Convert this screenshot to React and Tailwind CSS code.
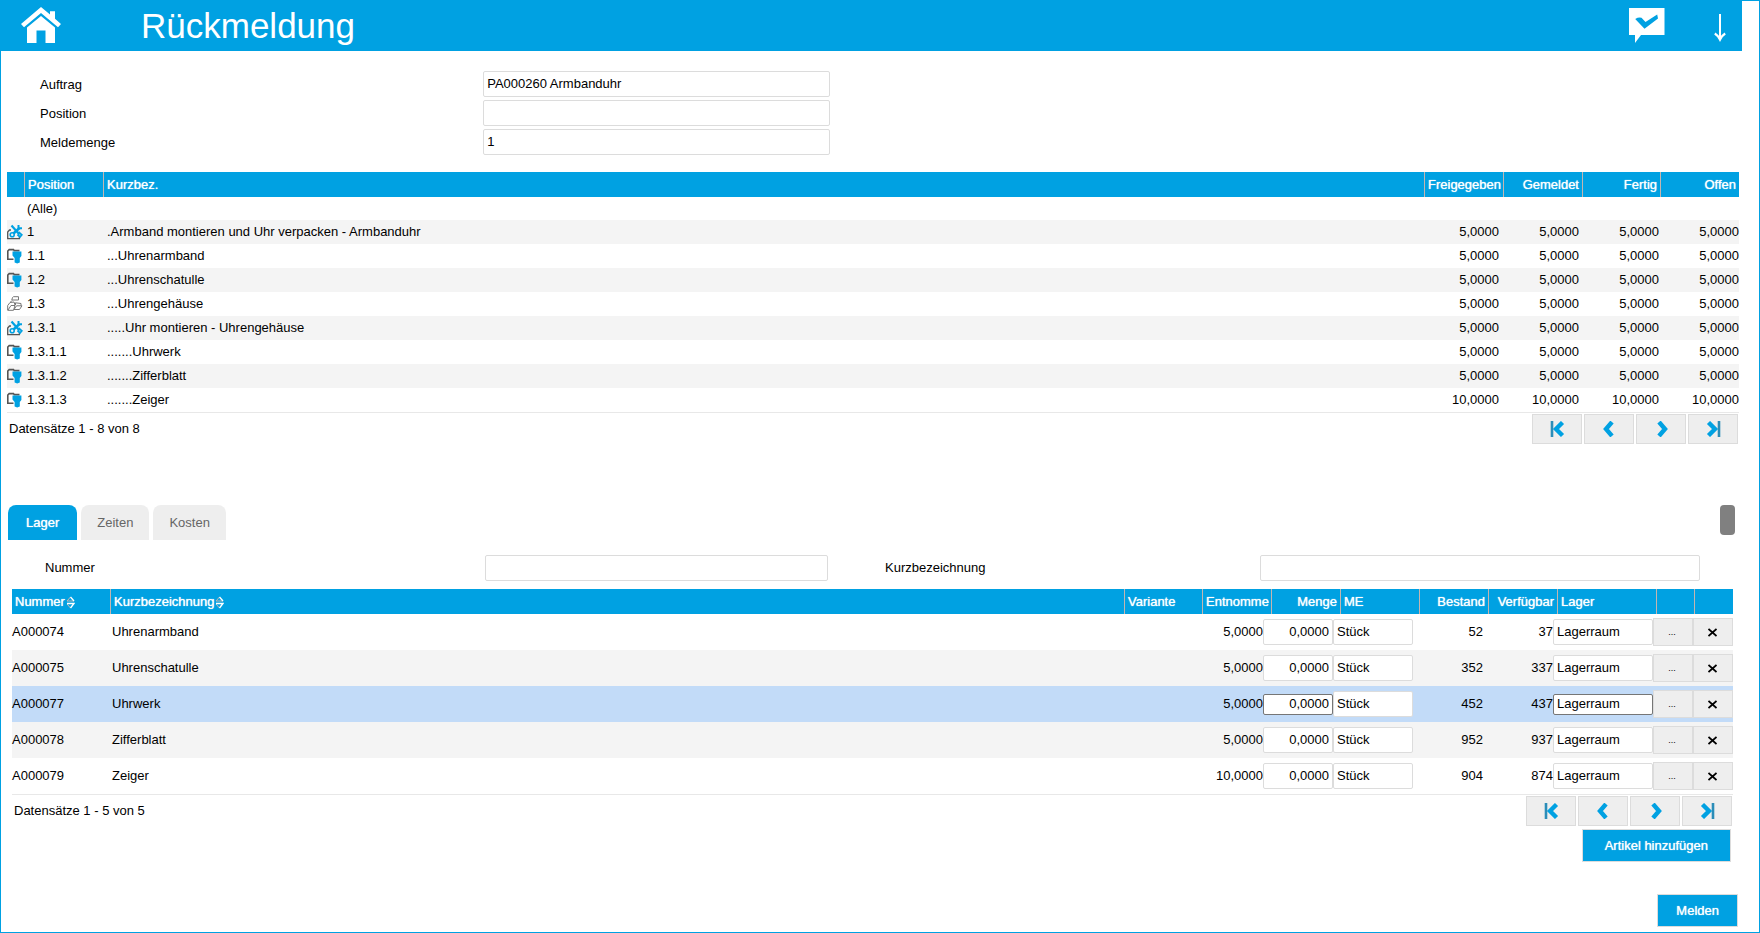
import React, { useState } from 'react';

const positions = [
  { icon: null, pos: '(Alle)', name: '', values: ['', '', '', ''] },
  { icon: 'work', pos: '1', name: '.Armband montieren und Uhr verpacken - Armbanduhr', values: ['5,0000', '5,0000', '5,0000', '5,0000'] },
  { icon: 'part', pos: '1.1', name: '...Uhrenarmband', values: ['5,0000', '5,0000', '5,0000', '5,0000'] },
  { icon: 'part', pos: '1.2', name: '...Uhrenschatulle', values: ['5,0000', '5,0000', '5,0000', '5,0000'] },
  { icon: 'group', pos: '1.3', name: '...Uhrengehäuse', values: ['5,0000', '5,0000', '5,0000', '5,0000'] },
  { icon: 'work', pos: '1.3.1', name: '.....Uhr montieren - Uhrengehäuse', values: ['5,0000', '5,0000', '5,0000', '5,0000'] },
  { icon: 'part', pos: '1.3.1.1', name: '.......Uhrwerk', values: ['5,0000', '5,0000', '5,0000', '5,0000'] },
  { icon: 'part', pos: '1.3.1.2', name: '.......Zifferblatt', values: ['5,0000', '5,0000', '5,0000', '5,0000'] },
  { icon: 'part', pos: '1.3.1.3', name: '.......Zeiger', values: ['10,0000', '10,0000', '10,0000', '10,0000'] },
];

const articles = [
  { nr: 'A000074', name: 'Uhrenarmband', taken: '5,0000', stock: '52', free: '37' },
  { nr: 'A000075', name: 'Uhrenschatulle', taken: '5,0000', stock: '352', free: '337' },
  { nr: 'A000077', name: 'Uhrwerk', taken: '5,0000', stock: '452', free: '437' },
  { nr: 'A000078', name: 'Zifferblatt', taken: '5,0000', stock: '952', free: '937' },
  { nr: 'A000079', name: 'Zeiger', taken: '10,0000', stock: '904', free: '874' },
];

const fieldClass = 'w-full min-w-0 h-[26px] rounded-xs border border-[#dcdcdc] bg-white px-[3px] pb-[2px] outline-none';
const activeFieldClass = 'w-full min-w-0 h-[21px] rounded-xs border border-[#767676] bg-white px-[3px] pb-[2px] outline-none';
const headCell = 'overflow-hidden whitespace-nowrap px-[3px] leading-[25px] font-normal text-left border-l border-[#c4b5b0] text-shadow-[0_0_1px_#fff]';

const HomeIcon = () => (
  <svg width="40" height="37" viewBox="0 0 40 37" fill="#fff">
    <path d="M20 0 L29 7.6 V4.3 H34 V11.8 L40 17 L37 20.3 L20 6 L3 20.3 L0 17 Z" />
    <path d="M20 9 L34 20.5 V36 H24.5 V23.5 H15.5 V36 H6 V20.5 Z" />
  </svg>
);

const MessageIcon = () => (
  <svg width="36" height="36" viewBox="0 0 36 36">
    <path d="M0 0 H35.5 V27 H12 L6 35 V27 H0 Z" fill="#fff" />
    <path d="M6.2 11 Q9.5 9 12.5 9.8 L16.5 14 L28.2 6.4 L29 10.5 L15.5 20.8 Z" fill="#00a1e2" />
  </svg>
);

const DownIcon = () => (
  <svg width="12" height="28" viewBox="0 0 12 28" fill="none" stroke="#fff">
    <path d="M6 0 V26" strokeWidth="2" />
    <path d="M0.8 19.5 Q3.5 21 6 25.5 Q8.5 21 11.2 19.5" strokeWidth="2.4" />
  </svg>
);

const RowIcon = ({ type }) => {
  if (type === 'work') {
    return (
      <svg width="16" height="16" viewBox="0 0 16 16" fill="none">
        <path d="M4 6 H2.5 L0.7 8 V14.7 H12.4 V12.5" stroke="#555" strokeWidth="1.3" />
        <path d="M4.5 1.5 L12.5 10.5" stroke="#00a1e2" strokeWidth="2.2" />
        <path d="M12.5 4 L6.5 9.5" stroke="#00a1e2" strokeWidth="2.6" />
        <path d="M11.5 1 V4.3 H15" stroke="#00a1e2" strokeWidth="2" />
        <path d="M10.5 10.5 L13 13 L14.8 10.8 L11.5 8" stroke="#00a1e2" strokeWidth="1.8" />
        <circle cx="5.2" cy="10.8" r="2" stroke="#00a1e2" strokeWidth="1.6" />
      </svg>
    );
  }
  if (type === 'part') {
    return (
      <svg width="16" height="16" viewBox="0 0 16 16" fill="none">
        <path d="M6.5 11.2 H0.8 V3 L2.2 1.6 H6.5 L7.2 2.6 H12.5" stroke="#555" strokeWidth="1.6" />
        <path d="M5.5 3.6 H14.4 V8 L12.8 10 V14.6 Q10.2 16.2 7.6 14.6 V10 L5.5 7.5 Z" fill="#00a1e2" />
      </svg>
    );
  }
  if (type === 'group') {
    return (
      <svg width="16" height="16" viewBox="0 0 16 16" fill="none" stroke="#777">
        <path d="M5.5 1.5 L6.5 0.7 H11.5 V4 H4.8 L5.5 1.5 M5 4.5 L3.5 6" />
        <path d="M0.7 14.3 V9.5 L3 6.5 L7 6 L8 9 M1 14 L4 9.5 H8 L6.5 14.3 H0.7" />
        <path d="M8.5 9 V6.8 L14 7.5 V9.5 M7 13.5 L9.5 9.8 H15 L12.5 13.5 H7" />
      </svg>
    );
  }
  return null;
};

const SortIcon = () => (
  <svg className="ml-px inline-block" width="9" height="13" viewBox="0 0 9 13" fill="none">
    <path d="M4.5 1 L1 5 H8" stroke="#c4b5b0" />
    <path d="M4.5 1 L8 5" stroke="#fff" strokeWidth="1.4" />
    <path d="M4.5 12 L1 8" stroke="#c4b5b0" />
    <path d="M1 7.5 H8 L4.5 12" stroke="#fff" strokeWidth="1.4" />
  </svg>
);

const pagerButtons = [
  { label: 'Erste Seite', chevron: 'M12.5 1.5 L6 8 L12.5 14.5', bar: 'M2 0 V16' },
  { label: 'Vorherige Seite', chevron: 'M10 1 L4 8 L10 15' },
  { label: 'Nächste Seite', chevron: 'M5 1 L11 8 L5 15' },
  { label: 'Letzte Seite', chevron: 'M2.5 1.5 L9 8 L2.5 14.5', bar: 'M13 0 V16' },
];

const Pager = () => (
  <div className="flex gap-[2px]">
    {pagerButtons.map((b) => (
      <button
        key={b.label}
        type="button"
        aria-label={b.label}
        className="flex h-[30px] w-[50px] items-center justify-center border border-[#dcdcdc] bg-[#eee]"
      >
        <svg width="15" height="16" viewBox="0 0 15 16" fill="none">
          <path d={b.chevron} stroke="#00a1e2" strokeWidth="4.4" />
          {b.bar && <path d={b.bar} stroke="#2b8db8" strokeWidth="2.6" />}
        </svg>
      </button>
    ))}
  </div>
);

const FormRow = ({ id, label, value }) => (
  <div className="grid grid-cols-[444fr_347fr_911fr] items-center pl-[39px]">
    <label htmlFor={id} className="pt-[2px]">{label}</label>
    <input id={id} type="text" defaultValue={value} className={fieldClass} />
  </div>
);

const PositionTable = () => (
  <table className="block">
    <thead className="block bg-[#00a1e2] text-white">
      <tr className="grid grid-cols-[17px_79px_1fr_79px_79px_78px_79px]">
        <th aria-label="Typ" className="h-[25px]" />
        <th className={headCell}>Position</th>
        <th className={headCell}>Kurzbez.</th>
        <th className={headCell}>Freigegeben</th>
        <th className={`${headCell} text-right`}>Gemeldet</th>
        <th className={`${headCell} text-right`}>Fertig</th>
        <th className={`${headCell} text-right`}>Offen</th>
      </tr>
    </thead>
    <tbody className="block border-b border-[#e8e8e8]">
      {positions.map((row) => (
        <tr
          key={row.pos}
          className="grid grid-cols-[18px_79px_1fr_80px_80px_80px_80px] h-6 leading-6 first:h-[23px] even:bg-[#f4f4f4]"
        >
          <td className="flex items-center">
            <RowIcon type={row.icon} />
          </td>
          <td className="pl-[2px]">{row.pos}</td>
          <td className="pl-[3px]">{row.name}</td>
          {row.values.map((v, i) => (
            <td key={i} className="text-right">{v}</td>
          ))}
        </tr>
      ))}
    </tbody>
  </table>
);

const ArticleTable = () => {
  const [selected, setSelected] = useState('A000077');

  const rowColor = (nr, index) => {
    if (nr === selected) return 'bg-[#c2dbf8]';
    return index % 2 ? 'bg-[#f4f4f4]' : 'bg-white';
  };

  return (
    <table className="block">
      <thead className="block bg-[#00a1e2] text-white">
        <tr className="grid grid-cols-[98px_1fr_78px_69px_69px_79px_69px_69px_99px_38px_39px]">
          <th className={`${headCell} border-l-0`}>Nummer<SortIcon /></th>
          <th className={headCell}>Kurzbezeichnung<SortIcon /></th>
          <th className={headCell}>Variante</th>
          <th className={headCell}>Entnomme</th>
          <th className={`${headCell} text-right`}>Menge</th>
          <th className={headCell}>ME</th>
          <th className={`${headCell} text-right`}>Bestand</th>
          <th className={`${headCell} text-right`}>Verfügbar</th>
          <th className={headCell}>Lager</th>
          <th aria-label="Auswahl" className={headCell} />
          <th aria-label="Entfernen" className={headCell} />
        </tr>
      </thead>
      <tbody className="block border-b border-[#e8e8e8]">
        {articles.map((a, index) => {
          const field = a.nr === selected ? activeFieldClass : fieldClass;
          return (
            <tr
              key={a.nr}
              onClick={() => setSelected(a.nr)}
              className={`grid h-9 grid-cols-[99px_1fr_80px_70px_70px_80px_70px_70px_100px_40px_40px] items-center ${rowColor(a.nr, index)}`}
            >
              <td>{a.nr}</td>
              <td className="pl-px">{a.name}</td>
              <td />
              <td className="text-right">{a.taken}</td>
              <td className="flex">
                <input aria-label="Menge" type="text" defaultValue="0,0000" className={`${field} text-right`} />
              </td>
              <td className="flex">
                <input aria-label="ME" type="text" defaultValue="Stück" className={fieldClass} />
              </td>
              <td className="text-right">{a.stock}</td>
              <td className="text-right">{a.free}</td>
              <td className="flex">
                <input aria-label="Lager" type="text" defaultValue="Lagerraum" className={field} />
              </td>
              <td className="flex">
                <button type="button" className="h-7 w-full border border-[#dcdcdc] bg-[#eee] pr-[2px] text-[9px]">...</button>
              </td>
              <td className="flex">
                <button
                  type="button"
                  aria-label="Entfernen"
                  className="flex h-7 w-full items-center justify-center border border-[#dcdcdc] bg-[#eee] pr-px"
                >
                  <svg width="9" height="9" viewBox="0 0 9 9" stroke="#000" strokeWidth="1.7">
                    <path d="M0.5 1 L8.5 8 M8.5 1 L0.5 8" />
                  </svg>
                </button>
              </td>
            </tr>
          );
        })}
      </tbody>
    </table>
  );
};

const tabs = ['Lager', 'Zeiten', 'Kosten'];

const App = () => {
  const [tab, setTab] = useState('Lager');

  return (
    <div className="flex min-h-screen flex-col border border-[#00a1e2] bg-white font-['Liberation_Sans',Arial,sans-serif] text-[13px] leading-5 text-black">
      <header className="-mt-px mr-[17px] flex h-[51px] items-center bg-[#00a1e2] pl-5 pr-4 text-white">
        <a href="#start" aria-label="Startseite" className="w-[120px]">
          <HomeIcon />
        </a>
        <h1 className="flex-1 text-[35px] leading-[50px]">Rückmeldung</h1>
        <button type="button" aria-label="Meldungen" className="mr-[49px]">
          <MessageIcon />
        </button>
        <button type="button" aria-label="Nach unten" className="pt-[5px]">
          <DownIcon />
        </button>
      </header>

      <main className="flex flex-1 flex-col pr-5 pl-[6px]">
        <form className="-ml-[6px] flex flex-col gap-[3px] pt-5">
          <FormRow id="auftrag" label="Auftrag" value="PA000260 Armbanduhr" />
          <FormRow id="position" label="Position" value="" />
          <FormRow id="meldemenge" label="Meldemenge" value="1" />
        </form>

        <section className="mt-[17px]">
          <PositionTable />
          <div className="flex items-center justify-between pt-px pr-px pl-[2px]">
            <span>Datensätze 1 - 8 von 8</span>
            <Pager />
          </div>
        </section>

        <div className="mt-[61px] flex items-start justify-between pr-1 pl-px">
          <div role="tablist" className="flex gap-1">
            {tabs.map((name) => (
              <button
                key={name}
                type="button"
                role="tab"
                aria-selected={tab === name}
                onClick={() => setTab(name)}
                className={`h-[35px] rounded-t-lg ${
                  tab === name ? 'bg-[#00a1e2] px-[18px] text-white text-shadow-[0_0_1px_#fff]' : 'bg-[#eee] px-4 text-[#666]'
                }`}
              >
                {name}
              </button>
            ))}
          </div>
          <div className="h-[30px] w-[15px] rounded bg-[#808080]" />
        </div>

        <section className="pr-[6px] pl-[5px]">
          <div className="grid grid-cols-[440fr_343fr_57fr_375fr_440fr_33fr] items-center pt-[15px] pb-2 pl-[33px]">
            <label htmlFor="nummer">Nummer</label>
            <input id="nummer" type="text" className={fieldClass} />
            <span />
            <label htmlFor="kurzbezeichnung">Kurzbezeichnung</label>
            <input id="kurzbezeichnung" type="text" className={fieldClass} />
          </div>
          <ArticleTable />
          <div className="flex items-center justify-between pt-px pr-px pl-[2px]">
            <span>Datensätze 1 - 5 von 5</span>
            <Pager />
          </div>
          <div className="flex justify-end pt-[3px] pr-[2px]">
            <button type="button" className="h-[33px] border border-[#dcdcdc] bg-[#00a1e2] px-[22px] text-white text-shadow-[0_0_1px_#fff]">
              Artikel hinzufügen
            </button>
          </div>
        </section>

        <div className="mt-auto flex justify-end pt-6 pr-px pb-[5px]">
          <button type="button" className="h-[33px] border border-[#dcdcdc] bg-[#00a1e2] px-[18px] text-white text-shadow-[0_0_1px_#fff]">
            Melden
          </button>
        </div>
      </main>
    </div>
  );
};

export default App;
